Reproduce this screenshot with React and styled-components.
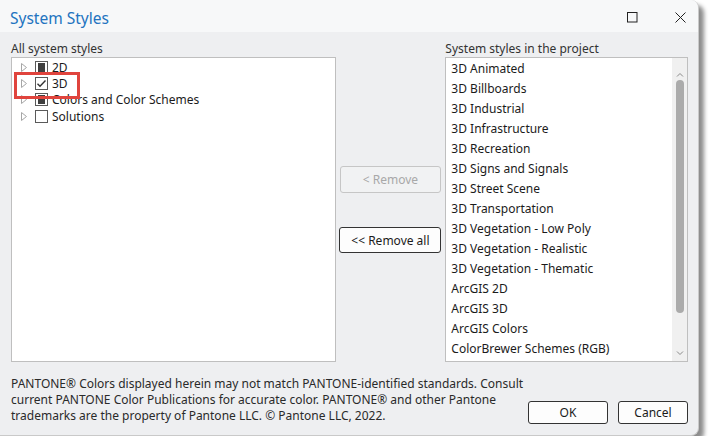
import React from 'react';
import styled, { createGlobalStyle } from 'styled-components';

const GlobalStyle = createGlobalStyle`
  html, body {
    margin: 0;
    padding: 0;
    background: #fff;
  }
  body {
    font-family: "Noto Sans", "Open Sans", sans-serif;
    font-size: 12px;
    color: #1b1b1b;
  }
`;

const Window = styled.div`
  width: 699px;
  height: 436px;
  box-sizing: border-box;
  background: #eeeff1;
  border: 1px solid #c9c9c9;
  border-left: none;
  border-top: none;
  border-radius: 0 8px 8px 0;
  box-shadow: 5px 5px 4px rgba(0, 0, 0, 0.45);
  display: flex;
  flex-direction: column;
  overflow: hidden;
`;

const TitleBar = styled.div`
  height: 32px;
  flex: none;
  display: flex;
  align-items: center;
  gap: 12px;
  padding-left: 10px;
  padding-top: 3px;
  box-sizing: border-box;
  background: #f7f8f9;
`;

const Title = styled.div`
  flex: 1;
  font-size: 15.5px;
  color: #2273c0;
`;

const TitleButton = styled.div`
  width: 36px;
  height: 28px;
  display: flex;
  align-items: center;
  justify-content: center;
`;

const Body = styled.div`
  display: flex;
  padding: 10px 10px 0 11px;
`;

const Column = styled.div`
  display: flex;
  flex-direction: column;
  width: ${p => p.$width}px;
`;

const Label = styled.div`
  height: 15px;
  line-height: 13px;
  color: #333;
`;

const Panel = styled.div`
  position: relative;
  height: 305px;
  box-sizing: border-box;
  background: #fff;
  border: 1px solid #bfbfbf;
  display: flex;
`;

const Tree = styled.div`
  padding-top: 1px;
  display: flex;
  flex-direction: column;
`;

const TreeRow = styled.div`
  height: 16.3px;
  display: flex;
  align-items: center;
  padding-left: 9px;
`;

const Expander = styled.svg`
  width: 7px;
  height: 9px;
  margin-right: 7px;
`;

const Box = styled.div`
  width: 13px;
  height: 13px;
  box-sizing: border-box;
  border: 1px solid #5a5a5a;
  margin-right: 4px;
  display: flex;
  align-items: center;
  justify-content: center;
  background: #fff;
`;

const Fill = styled.div`
  width: 7px;
  height: 9px;
  background: #3f3f3f;
`;

const Highlight = styled.div`
  position: absolute;
  left: 2px;
  top: 14px;
  width: 66px;
  height: 27px;
  box-sizing: border-box;
  border: 3px solid #e0443d;
`;

const Middle = styled.div`
  width: 110px;
  display: flex;
  flex-direction: column;
  align-items: center;
  padding-top: 124px;
  gap: 34px;
`;

const Button = styled.button`
  width: ${p => p.$width}px;
  height: ${p => p.$height}px;
  box-sizing: border-box;
  border-radius: 3px;
  border: 1px solid ${p => (p.disabled ? '#c6c6c6' : '#333')};
  background: ${p => (p.disabled ? '#f1f2f3' : '#fdfdfd')};
  color: ${p => (p.disabled ? '#a8a8a8' : '#1b1b1b')};
  font-family: inherit;
  font-size: 12px;
  padding: 0;
`;

const List = styled.div`
  flex: 1;
  padding-top: 1px;
  display: flex;
  flex-direction: column;
`;

const ListItem = styled.div`
  height: 20px;
  line-height: 20px;
  padding-left: 5px;
`;

const ScrollBar = styled.div`
  width: 15px;
  background: #f0f0f0;
  display: flex;
  flex-direction: column;
  align-items: center;
`;

const Arrow = styled.svg`
  width: 8px;
  height: 6px;
  margin: ${p => p.$margin};
`;

const Thumb = styled.div`
  width: 8px;
  height: 233px;
  border-radius: 4px;
  background: #ababab;
  margin-top: 2px;
`;

const Footer = styled.div`
  display: flex;
  align-items: flex-end;
  padding: 14px 10px 0 11px;
`;

const Notice = styled.div`
  flex: 1;
  line-height: 16px;
  color: #2a2a2a;
`;

const Actions = styled.div`
  display: flex;
  gap: 10px;
  padding-bottom: 0;
`;

const styles = [
  '3D Animated',
  '3D Billboards',
  '3D Industrial',
  '3D Infrastructure',
  '3D Recreation',
  '3D Signs and Signals',
  '3D Street Scene',
  '3D Transportation',
  '3D Vegetation - Low Poly',
  '3D Vegetation - Realistic',
  '3D Vegetation - Thematic',
  'ArcGIS 2D',
  'ArcGIS 3D',
  'ArcGIS Colors',
  'ColorBrewer Schemes (RGB)',
];

const tree = [
  { name: '2D', state: 'partial' },
  { name: '3D', state: 'checked' },
  { name: 'Colors and Color Schemes', state: 'partial' },
  { name: 'Solutions', state: 'none' },
];

function CheckBox({ state }) {
  return (
    <Box>
      {state === 'partial' && <Fill />}
      {state === 'checked' && (
        <svg width="11" height="11" viewBox="0 0 11 11">
          <path d="M1.5 5.8 L4 8.3 L9.5 2.5" fill="none" stroke="#333" strokeWidth="1.4" />
        </svg>
      )}
    </Box>
  );
}

export default function App() {
  return (
    <>
      <GlobalStyle />
      <Window>
        <TitleBar>
          <Title>System Styles</Title>
          <TitleButton>
            <svg width="11" height="11" viewBox="0 0 11 11">
              <rect x="0.5" y="0.5" width="9.5" height="9.5" fill="none" stroke="#222" />
            </svg>
          </TitleButton>
          <TitleButton>
            <svg width="11" height="11" viewBox="0 0 11 11">
              <path d="M0.5 0.5 L10.5 10.5 M10.5 0.5 L0.5 10.5" stroke="#222" strokeWidth="1" />
            </svg>
          </TitleButton>
        </TitleBar>
        <Body>
          <Column $width={325}>
            <Label>All system styles</Label>
            <Panel>
              <Tree>
                {tree.map(t => (
                  <TreeRow key={t.name}>
                    <Expander viewBox="0 0 7 9">
                      <path d="M0.5 0.5 L5.5 4.5 L0.5 8.5 Z" fill="none" stroke="#a6a6a6" />
                    </Expander>
                    <CheckBox state={t.state} />
                    {t.name}
                  </TreeRow>
                ))}
              </Tree>
              <Highlight />
            </Panel>
          </Column>
          <Middle>
            <Button disabled $width={101} $height={27}>&lt; Remove</Button>
            <Button $width={102} $height={26}>&lt;&lt; Remove all</Button>
          </Middle>
          <Column $width={243}>
            <Label>System styles in the project</Label>
            <Panel>
              <List>
                {styles.map(s => (
                  <ListItem key={s}>{s}</ListItem>
                ))}
              </List>
              <ScrollBar>
                <Arrow viewBox="0 0 8 6" $margin="14px 0 0">
                  <path d="M1 4.5 L4 1.5 L7 4.5" fill="none" stroke="#8a8a8a" />
                </Arrow>
                <Thumb />
                <Arrow viewBox="0 0 8 6" $margin="auto 0 5px">
                  <path d="M1 1.5 L4 4.5 L7 1.5" fill="none" stroke="#8a8a8a" />
                </Arrow>
              </ScrollBar>
            </Panel>
          </Column>
        </Body>
        <Footer>
          <Notice>
            PANTONE® Colors displayed herein may not match PANTONE-identified standards. Consult
            <br />
            current PANTONE Color Publications for accurate color. PANTONE® and other Pantone
            <br />
            trademarks are the property of Pantone LLC. © Pantone LLC, 2022.
          </Notice>
          <Actions>
            <Button $width={80} $height={23}>OK</Button>
            <Button $width={70} $height={23}>Cancel</Button>
          </Actions>
        </Footer>
      </Window>
    </>
  );
}
